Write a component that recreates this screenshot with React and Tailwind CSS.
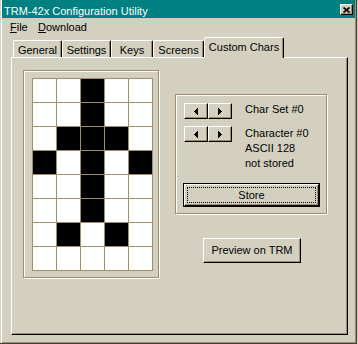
import React from 'react';

const raised = 'bg-[#d4d0c0] border-t border-l border-r border-b border-t-white border-l-white border-r-black border-b-black shadow-[inset_-1px_-1px_0_#a28d68]';
const etched = 'border border-[#a28d68] shadow-[inset_1px_1px_0_#ffffff,1px_1px_0_#ffffff]';
const tab = 'h-[17px] pt-[2px] leading-[14px] text-center border-t border-l border-r border-t-white border-l-white border-r-black shadow-[inset_-1px_0_0_#a28d68] rounded-t-[2px]';

const pattern = [
    '00100',
    '00100',
    '01110',
    '10101',
    '00100',
    '00100',
    '01010',
    '00000'
];

function ArrowPair() {
    return (
        <div className="flex">
            <div className={`${raised} w-[24px] h-[16px] flex items-center justify-center`}>
                <svg width="4" height="7" viewBox="0 0 4 7" shapeRendering="crispEdges">
                    <polygon points="4,0 4,7 0,3.5" fill="#000" />
                </svg>
            </div>
            <div className={`${raised} w-[24px] h-[16px] flex items-center justify-center`}>
                <svg width="4" height="7" viewBox="0 0 4 7" shapeRendering="crispEdges">
                    <polygon points="0,0 0,7 4,3.5" fill="#000" />
                </svg>
            </div>
        </div>
    );
}

export default function App() {
    return (
        <div className="w-[358px] h-[344px] bg-[#d4d0c0] font-['Liberation_Sans',Arial,sans-serif] text-[11px] text-black overflow-hidden">
            <div className="w-[357px] h-[344px] pl-[2px] pr-[1px] border-r border-b border-r-[#404040] border-b-[#404040] shadow-[inset_1px_0_0_#d4d0c0,inset_2px_0_0_#ffffff,inset_-1px_-1px_0_#a28d68]">
                {/* title bar */}
                <div className="h-[18px] bg-[#008080] flex items-start text-white">
                    <span className="pl-[2px] pt-[2px] leading-[18px] whitespace-nowrap">TRM-42x Configuration Utility</span>
                    <div className={`${raised} ml-auto mt-[4px] mr-[2px] w-[13px] h-[11px] flex items-center justify-center`}>
                        <svg width="7" height="6" viewBox="0 0 7 6">
                            <path d="M0.5 0.5L6.5 5.5M6.5 0.5L0.5 5.5" stroke="#000" strokeWidth="1.7" />
                        </svg>
                    </div>
                </div>

                {/* menu */}
                <div className="h-[18px] flex leading-[18px] pl-[8px]">
                    <span className="w-[28px]"><span className="underline">F</span>ile</span>
                    <span><span className="underline">D</span>ownload</span>
                </div>

                {/* tabs */}
                <div className="h-[21px] flex items-end pl-[11px]">
                    <div className={`${tab} w-[49px]`}>General</div>
                    <div className={`${tab} w-[49px]`}>Settings</div>
                    <div className={`${tab} w-[42px]`}>Keys</div>
                    <div className={`${tab} w-[51px]`}>Screens</div>
                    <div className="relative z-10 -mb-px h-[21px] w-[80px] pt-[2px] leading-[14px] text-center bg-[#d4d0c0] border-t border-l border-r border-t-white border-l-white border-r-black shadow-[inset_-1px_0_0_#a28d68] rounded-t-[2px]">
                        Custom Chars
                    </div>
                </div>

                {/* tab page */}
                <div className="ml-[9px] w-[337px] h-[278px] border-t border-l border-t-white border-l-white border-r border-b border-r-black border-b-black shadow-[inset_-1px_-1px_0_#a28d68] flex items-start">
                    <div className={`${etched} ml-[11px] mt-[12px] w-[136px] h-[208px] pl-[8px] pt-[7px]`}>
                        <div className="grid grid-cols-[repeat(5,23px)] gap-px p-px bg-[#a28d68] w-fit">
                            {pattern.map((row, r) =>
                                row.split('').map((c, i) => (
                                    <div key={`${r}-${i}`} className={c === '1' ? 'h-[23px] bg-black' : 'h-[23px] bg-white'} />
                                ))
                            )}
                        </div>
                    </div>

                    <div className="ml-[16px] mt-[36px] flex flex-col items-start">
                        <div className={`${etched} w-[152px] h-[120px] pl-[8px] pt-[8px] flex flex-col items-start`}>
                            <div className="flex items-start">
                                <ArrowPair />
                                <span className="ml-[13px] leading-[15px] -mt-[1px]">Char Set #0</span>
                            </div>
                            <div className="flex items-start mt-[7px]">
                                <ArrowPair />
                                <div className="ml-[13px] leading-[15px] flex flex-col">
                                    <span>Character #0</span>
                                    <span>ASCII 128</span>
                                    <span>not stored</span>
                                </div>
                            </div>
                            <div className="mt-[12px] -ml-px w-[137px] h-[24px] border border-black">
                                <div className={`${raised} w-full h-full p-[2px]`}>
                                    <div className="h-full border border-dotted border-black flex items-center justify-center leading-[14px]">
                                        Store
                                    </div>
                                </div>
                            </div>
                        </div>

                        <div className={`${raised} mt-[24px] ml-[28px] w-[98px] h-[25px] flex items-center justify-center`}>
                            Preview on TRM
                        </div>
                    </div>
                </div>
            </div>
        </div>
    );
}
